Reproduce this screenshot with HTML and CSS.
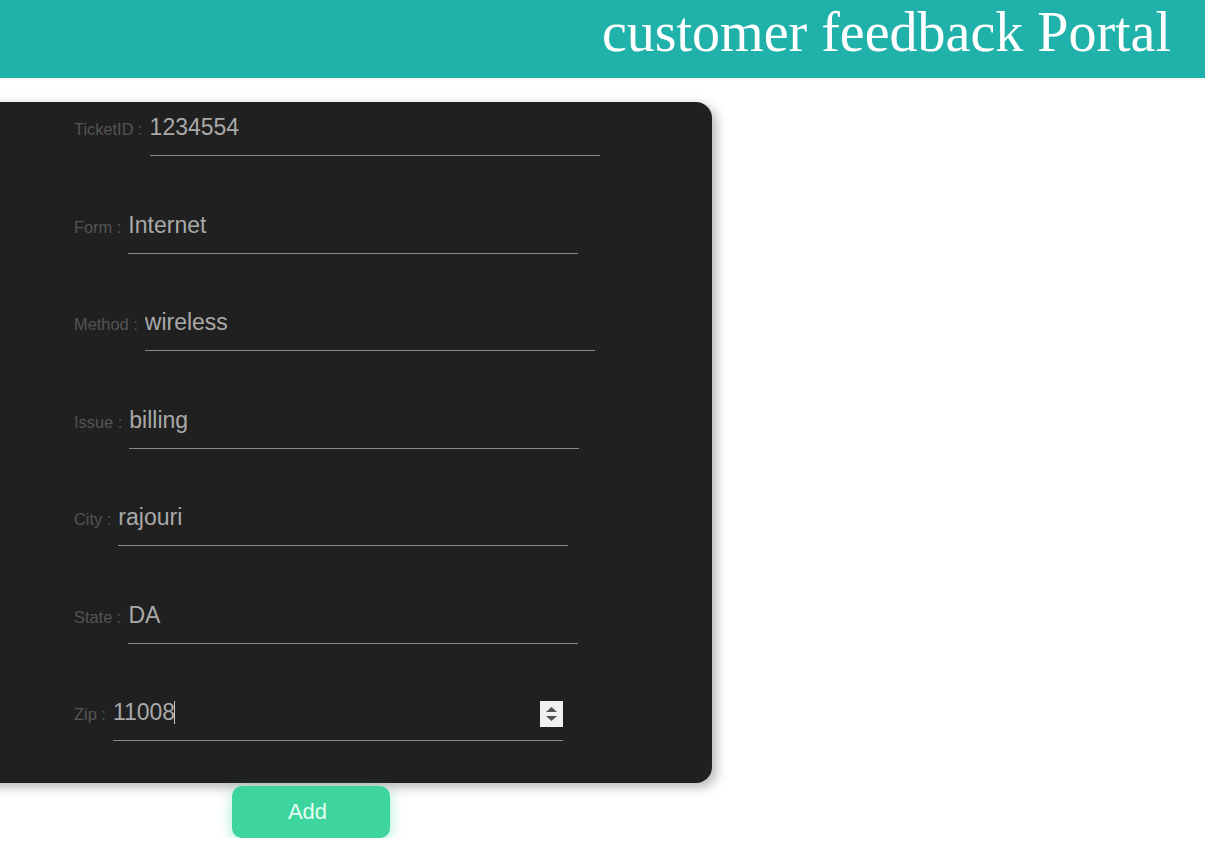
FILE: index.html
```html
<!DOCTYPE html>
<html>
<head>
<meta charset="utf-8">
<title>customer feedback Portal</title>
<link rel="stylesheet" href="styles.css">
</head>
<body>
<header class="topbar">
  <h1 class="title">customer feedback Portal</h1>
</header>
<main class="main">
  <form class="panel">
    <div class="card">
      <div class="field"><label class="label">TicketID :</label><input class="input" type="text" value="1234554"></div>
      <div class="field"><label class="label">Form :</label><input class="input" type="text" value="Internet"></div>
      <div class="field"><label class="label">Method :</label><input class="input" type="text" value="wireless"></div>
      <div class="field"><label class="label">Issue :</label><input class="input" type="text" value="billing"></div>
      <div class="field"><label class="label">City :</label><input class="input" type="text" value="rajouri"></div>
      <div class="field"><label class="label">State :</label><input class="input" type="text" value="DA"></div>
      <div class="field"><label class="label">Zip :</label><span class="input-wrap"><input class="input" type="text" value="11008"><span class="caret"></span><span class="spinner"><svg width="23" height="26" viewBox="0 0 23 26"><path d="M11.5 6 L17 11 L6 11 Z" fill="#505050"/><path d="M6 15 L17 15 L11.5 20 Z" fill="#505050"/></svg></span></span></div>
    </div>
    <div class="actions"><button class="btn" type="button">Add</button></div>
  </form>
</main>
</body>
</html>
```
FILE: styles.css
```css
html, body {
  margin: 0;
  padding: 0;
  background: #ffffff;
  overflow: hidden;
}
body {
  font-family: "Liberation Sans", Arial, sans-serif;
}
.topbar {
  background: #20b2aa;
  height: 78px;
  display: flex;
  justify-content: flex-end;
  align-items: flex-start;
  padding-right: 34px;
}
.title {
  margin: 0;
  font-family: "Liberation Serif", "Times New Roman", serif;
  font-weight: normal;
  font-size: 56px;
  line-height: 1;
  color: #ffffff;
  padding-top: 4px;
}
.main {
  padding-top: 24px;
}
.panel {
  width: 802px;
  margin-left: -90px;
  display: flex;
  flex-direction: column;
}
.card {
  background: #202020;
  border-radius: 16px;
  box-shadow: 4px 4px 12px rgba(0, 0, 0, 0.3);
  padding: 0 0 42px 164px;
  display: flex;
  flex-direction: column;
  gap: 57.5px;
  height: 681px;
  box-sizing: border-box;
}
.field {
  display: flex;
  align-items: baseline;
  height: 40px;
}
.field:first-child {
  margin-top: 10px;
}
.label {
  font-size: 16.4px;
  color: #545454;
  margin-right: 7px;
}
.input-wrap {
  position: relative;
  display: inline-block;
}
.input {
  width: 450px;
  box-sizing: border-box;
  background: transparent;
  border: none;
  border-bottom: 1px solid #8a8a8a;
  outline: none;
  color: #a9a9a9;
  font-family: "Liberation Sans", Arial, sans-serif;
  font-size: 23px;
  padding: 2px 0 14px 0;
  margin: 0;
}
.caret {
  position: absolute;
  left: 61px;
  top: 4px;
  width: 1px;
  height: 23px;
  background: #c8c8c8;
}
.spinner {
  position: absolute;
  right: 0;
  top: 4px;
  width: 23px;
  height: 26px;
  background: #f0f0f0;
  display: block;
}
.spinner svg {
  display: block;
}
.actions {
  display: flex;
  justify-content: center;
  padding-top: 3px;
}
.btn {
  width: 158px;
  height: 52px;
  border: none;
  border-radius: 10px;
  background: #3dd49e;
  color: #e6fff3;
  font-family: "Liberation Sans", Arial, sans-serif;
  font-size: 22px;
  padding: 0 7px 0 0;
  box-shadow: 0 4px 14px rgba(61, 212, 158, 0.45);
  cursor: pointer;
}
```
